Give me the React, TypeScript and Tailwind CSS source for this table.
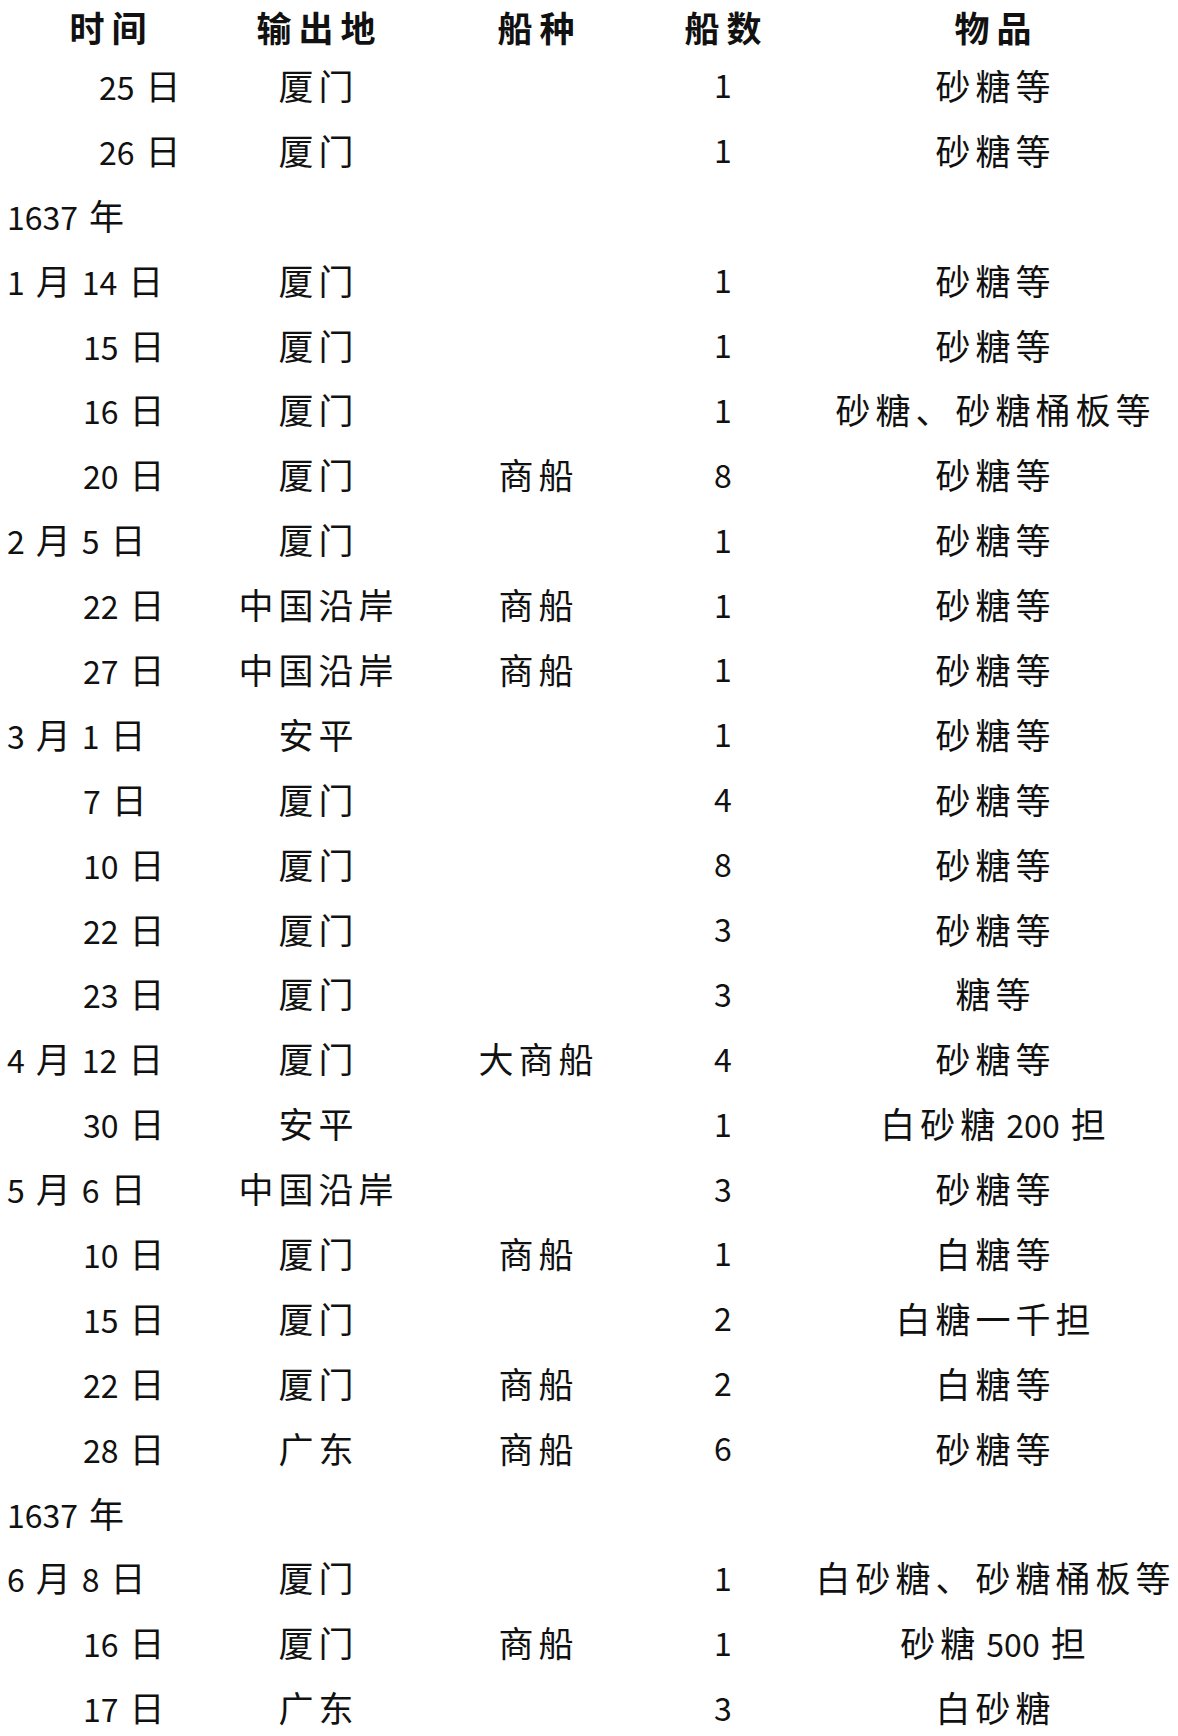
import React from 'react';

/**
 * 1636-1637 年 砂糖输出表
 * 扫描表格的复刻：五列（时间 / 输出地 / 船种 / 船数 / 物品），无边框
 */

type Indent = 'year' | 'day' | 'first';

type Row = {
  date: string;
  indent: Indent;
  place?: string;
  ship?: string;
  count?: string;
  goods?: string;
};

const rows: Row[] = [
  { date: '25 日', indent: 'first', place: '厦门', count: '1', goods: '砂糖等' },
  { date: '26 日', indent: 'first', place: '厦门', count: '1', goods: '砂糖等' },
  { date: '1637 年', indent: 'year' },
  { date: '1 月 14 日', indent: 'year', place: '厦门', count: '1', goods: '砂糖等' },
  { date: '15 日', indent: 'day', place: '厦门', count: '1', goods: '砂糖等' },
  { date: '16 日', indent: 'day', place: '厦门', count: '1', goods: '砂糖、砂糖桶板等' },
  { date: '20 日', indent: 'day', place: '厦门', ship: '商船', count: '8', goods: '砂糖等' },
  { date: '2 月 5 日', indent: 'year', place: '厦门', count: '1', goods: '砂糖等' },
  { date: '22 日', indent: 'day', place: '中国沿岸', ship: '商船', count: '1', goods: '砂糖等' },
  { date: '27 日', indent: 'day', place: '中国沿岸', ship: '商船', count: '1', goods: '砂糖等' },
  { date: '3 月 1 日', indent: 'year', place: '安平', count: '1', goods: '砂糖等' },
  { date: '7 日', indent: 'day', place: '厦门', count: '4', goods: '砂糖等' },
  { date: '10 日', indent: 'day', place: '厦门', count: '8', goods: '砂糖等' },
  { date: '22 日', indent: 'day', place: '厦门', count: '3', goods: '砂糖等' },
  { date: '23 日', indent: 'day', place: '厦门', count: '3', goods: '糖等' },
  { date: '4 月 12 日', indent: 'year', place: '厦门', ship: '大商船', count: '4', goods: '砂糖等' },
  { date: '30 日', indent: 'day', place: '安平', count: '1', goods: '白砂糖 200 担' },
  { date: '5 月 6 日', indent: 'year', place: '中国沿岸', count: '3', goods: '砂糖等' },
  { date: '10 日', indent: 'day', place: '厦门', ship: '商船', count: '1', goods: '白糖等' },
  { date: '15 日', indent: 'day', place: '厦门', count: '2', goods: '白糖一千担' },
  { date: '22 日', indent: 'day', place: '厦门', ship: '商船', count: '2', goods: '白糖等' },
  { date: '28 日', indent: 'day', place: '广东', ship: '商船', count: '6', goods: '砂糖等' },
  { date: '1637 年', indent: 'year' },
  { date: '6 月 8 日', indent: 'year', place: '厦门', count: '1', goods: '白砂糖、砂糖桶板等' },
  { date: '16 日', indent: 'day', place: '厦门', ship: '商船', count: '1', goods: '砂糖 500 担' },
  { date: '17 日', indent: 'day', place: '广东', count: '3', goods: '白砂糖' },
];

const indentClass: Record<Indent, string> = {
  year: 'pl-[7px]',
  day: 'pl-[83px]',
  first: 'pl-[99px]',
};

// digits are set without tracking, the CJK runs get spaced out
function Txt({ text }: { text?: string }) {
  if (!text) return null;
  return (
    <span className="inline-flex items-baseline gap-[11px]">
      {text.split(' ').map((tok, i) =>
        /^\d+$/.test(tok) ? (
          <span key={i} className="text-[32px]">
            {tok}
          </span>
        ) : (
          <span key={i} className="text-[35px] tracking-[5px] mr-[-5px]">
            {tok}
          </span>
        )
      )}
    </span>
  );
}

function Head({ text }: { text: string }) {
  return <span className="text-[35px] font-bold tracking-[7px] mr-[-7px]">{text}</span>;
}

export default function App() {
  return (
    <div className="w-[1178px] h-[1736px] overflow-hidden bg-white text-[#111] leading-none font-['Noto_Sans_CJK_SC',sans-serif]">
      {/* header */}
      <div className="flex h-[52px] items-center">
        <div className="w-[216px] flex justify-center">
          <Head text="时间" />
        </div>
        <div className="w-[200px] flex justify-center">
          <Head text="输出地" />
        </div>
        <div className="w-[240px] flex justify-center">
          <Head text="船种" />
        </div>
        <div className="w-[134px] flex justify-center">
          <Head text="船数" />
        </div>
        <div className="flex-1 flex justify-center pl-[18px]">
          <Head text="物品" />
        </div>
      </div>

      {rows.map((r, i) => (
        <div key={i} className="flex h-[64.9px] items-center">
          <div className={`w-[216px] flex ${indentClass[r.indent]}`}>
            <Txt text={r.date} />
          </div>
          <div className="w-[200px] flex justify-center">
            <Txt text={r.place} />
          </div>
          <div className="w-[240px] flex justify-center">
            <Txt text={r.ship} />
          </div>
          <div className="w-[134px] flex justify-center">
            <Txt text={r.count} />
          </div>
          <div className="flex-1 flex justify-center pl-[18px]">
            <Txt text={r.goods} />
          </div>
        </div>
      ))}
    </div>
  );
}
